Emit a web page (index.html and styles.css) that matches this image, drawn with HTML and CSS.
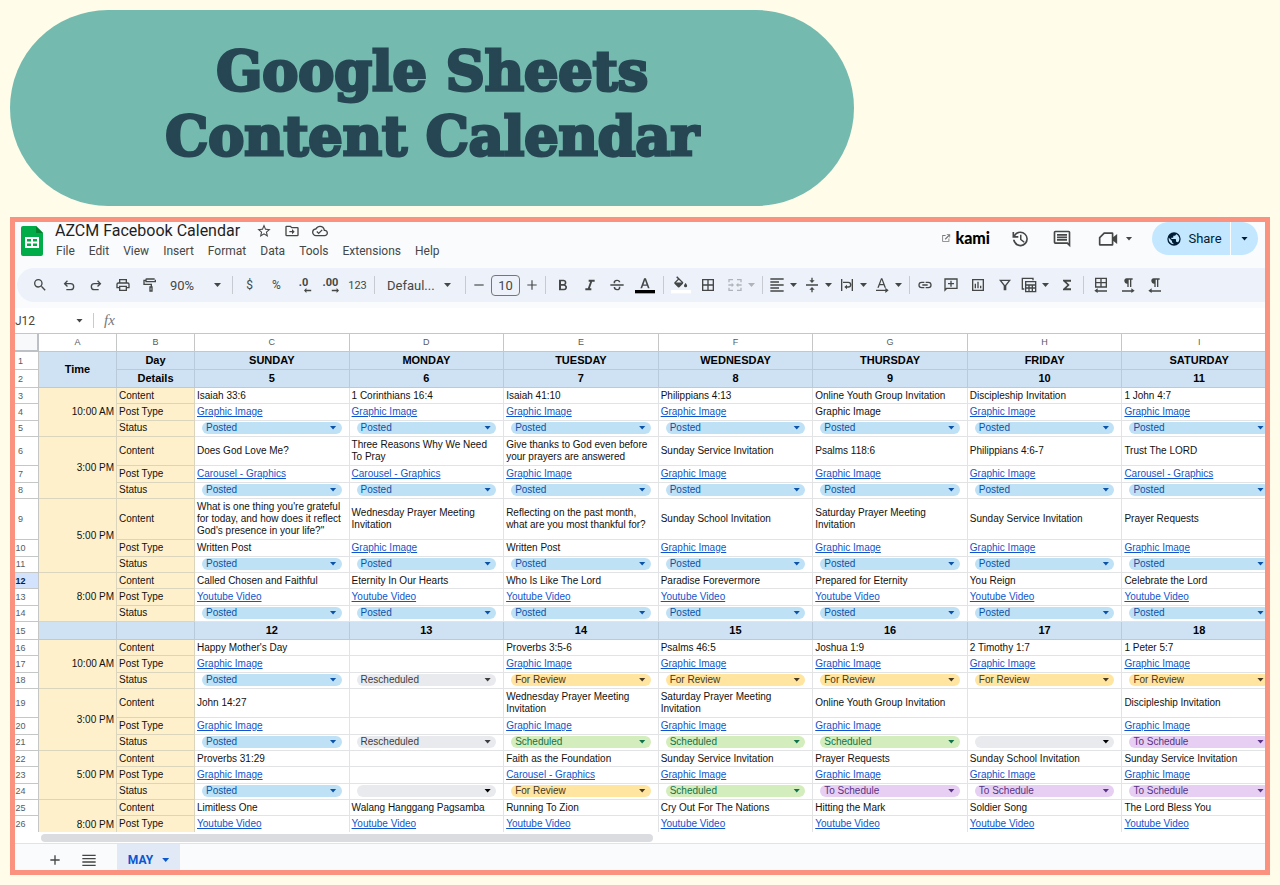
FILE: index.html
```html
<!DOCTYPE html>
<html lang="en">
<head>
  <meta charset="UTF-8">
  <meta name="viewport" content="width=device-width, initial-scale=1.0">
  <title>Google Sheets Content Calendar</title>
  <link rel="stylesheet" href="styles.css">
</head>
<body>
  <h1 class="banner">Google Sheets<br>Content Calendar</h1>

  <main class="frame">
    <header class="topbar">
      <svg class="logo" viewBox="0 0 22 30">
        <path fill="#00ac47" d="M2 0h13l7 7v21a2 2 0 0 1-2 2H2a2 2 0 0 1-2-2V2a2 2 0 0 1 2-2z"/>
        <path fill="#00832d" d="M15 0l7 7h-7z"/>
        <path fill="#fff" fill-rule="evenodd" d="M4 11h14v11H4zM6 13v2.500h4V13zM12 13v2.500h4V13zM6 17.500V20h4v-2.500zM12 17.500V20h4v-2.500z"/>
      </svg>
      <div class="doc">
        <div class="doc-title">
          <span class="doc-name">AZCM Facebook Calendar</span>
          <button class="doc-icon" aria-label="Star"><svg viewBox="0 0 24 24"><path d="M22 9.240l-7.190-.620L12 2 9.190 8.630 2 9.240l5.460 4.730L5.820 21 12 17.270 18.180 21l-1.630-7.030L22 9.240zM12 15.400l-3.760 2.270 1-4.280-3.320-2.880 4.380-.380L12 6.100l1.710 4.040 4.380.380-3.320 2.880 1 4.280L12 15.400z"/></svg></button>
          <button class="doc-icon" aria-label="Move"><svg viewBox="0 0 24 24"><path d="M20 6h-8l-2-2H4a2 2 0 0 0-2 2v12a2 2 0 0 0 2 2h16a2 2 0 0 0 2-2V8a2 2 0 0 0-2-2zm0 12H4V6h5.200l2 2H20zm-8-1l4-4-4-4v3H8v2h4z"/></svg></button>
          <button class="doc-icon" aria-label="Saved"><svg viewBox="0 0 24 24"><path d="M19.350 10.040A7.490 7.490 0 0 0 12 4C9.110 4 6.600 5.640 5.350 8.040A5.994 5.994 0 0 0 0 14c0 3.310 2.690 6 6 6h13c2.760 0 5-2.240 5-5 0-2.640-2.050-4.780-4.650-4.960zM19 18H6c-2.210 0-4-1.790-4-4 0-2.050 1.530-3.760 3.560-3.970l1.070-.110.500-.950A5.469 5.469 0 0 1 12 6c2.620 0 4.880 1.860 5.390 4.430l.300 1.500 1.530.110A2.980 2.980 0 0 1 22 15c0 1.650-1.350 3-3 3zm-9-3.820l-2.090-2.090L6.500 13.500 10 17l6.010-6.010-1.410-1.410z"/></svg></button>
        </div>
        <nav class="menu">
          <button>File</button>
          <button>Edit</button>
          <button>View</button>
          <button>Insert</button>
          <button>Format</button>
          <button>Data</button>
          <button>Tools</button>
          <button>Extensions</button>
          <button>Help</button>
        </nav>
      </div>
      <div class="actions">
        <button class="kami"><svg viewBox="0 0 24 24"><path d="M18 19H5V7h6V5H3v16h17v-8h-2zM14 3v2h4L9 14l2 2 9-9v4h2V3z"/></svg>kami</button>
        <button class="action" aria-label="History"><svg viewBox="0 0 24 24"><path d="M12.500 3A9 9 0 0 0 5 7V3.500H3V10.500H10V8.500H6.300A7 7 0 1 1 5.600 13H3.500A9 9 0 1 0 12.500 3zM12 7v6l4.500 3.500 1-1.500-3.700-2.800V7z"/></svg></button>
        <button class="action" aria-label="Comments"><svg viewBox="0 0 24 24"><path d="M22 4a2 2 0 0 0-2-2H4a2 2 0 0 0-2 2v12a2 2 0 0 0 2 2h14l4 4zM20 17l-1-1H4V4h16zM6 12h12v2H6zm0-3h12v2H6zm0-3h12v2H6z"/></svg></button>
        <button class="action meet" aria-label="Meet"><svg viewBox="0 0 24 24"><path d="M7 4h10a1.500 1.500 0 0 1 1.500 1.500v4L23 6v12l-4.500-3.500v4A1.500 1.500 0 0 1 17 20H2.500A1.500 1.500 0 0 1 1 18.500V10zM7.800 6L3 10.800V18h13.500V6z"/></svg><i class="caret"></i></button>
        <div class="share">
          <button class="share-main"><svg viewBox="0 0 24 24"><path d="M12 2a10 10 0 1 0 0 20 10 10 0 0 0 0-20zm-1 17.930A7.990 7.990 0 0 1 4.210 10.210L9 15v1a2 2 0 0 0 2 2zm6.900-2.540A2 2 0 0 0 16 16h-1v-3a1 1 0 0 0-1-1H8v-2h2a1 1 0 0 0 1-1V7h2a2 2 0 0 0 2-2v-.410a7.990 7.990 0 0 1 2.900 12.800z"/></svg>Share</button>
          <button class="share-more" aria-label="Share options"><i class="caret"></i></button>
        </div>
      </div>
    </header>

    <div class="toolbar">
      <button class="tool search" aria-label="Search"><svg viewBox="0 0 24 24"><path d="M15.500 14h-.790l-.280-.270A6.470 6.470 0 0 0 16 9.500 6.500 6.500 0 1 0 9.500 16c1.610 0 3.090-.590 4.230-1.570l.270.280v.790l5 4.990L20.490 19zm-6 0a4.500 4.500 0 1 1 0-9 4.500 4.500 0 0 1 0 9z"/></svg></button>
      <button class="tool" aria-label="Undo"><svg viewBox="0 0 24 24"><path d="M8 20v-2h6.500a3.500 3.500 0 0 0 0-7H7.800l2.600 2.600L9 15l-5-5 5-5 1.400 1.400L7.800 9h6.700a5.500 5.500 0 0 1 0 11z"/></svg></button>
      <button class="tool" aria-label="Redo"><svg viewBox="0 0 24 24"><path d="M16 20v-2H9.500a3.500 3.500 0 0 1 0-7h6.700l-2.600 2.600L15 15l5-5-5-5-1.400 1.400L16.200 9H9.500a5.500 5.500 0 0 0 0 11z"/></svg></button>
      <button class="tool" aria-label="Print"><svg viewBox="0 0 24 24"><path d="M19 8h-1V3H6v5H5a3 3 0 0 0-3 3v6h4v4h12v-4h4v-6a3 3 0 0 0-3-3zM8 5h8v3H8zm8 14H8v-4h8zm2-4v-2H6v2H4v-4a1 1 0 0 1 1-1h14a1 1 0 0 1 1 1v4z"/></svg></button>
      <button class="tool" aria-label="Paint format"><svg viewBox="0 0 24 24"><path d="M7 2h12v2h2v1H21v0a2 2 0 0 0 0 0V8H5V6H4v4h11v4h1v8h-5v-8h2v-2H2V4h3a2 2 0 0 1 2-2zm0 2v2h12V4zm6 12v4h1v-4z"/></svg></button>
      <button class="picker zoom">90%<i class="caret"></i></button>
      <span class="divider"></span>
      <button class="tool text">$</button>
      <button class="tool text">%</button>
      <button class="tool decimal" aria-label="Decrease decimal places">.0<svg viewBox="0 0 10 6"><path d="M3 0v2h6v2H3v2L0 3z"/></svg></button>
      <button class="tool decimal" aria-label="Increase decimal places">.00<svg viewBox="0 0 10 6"><path d="M7 0v2H1v2h6v2l3-3z"/></svg></button>
      <button class="tool text small">123</button>
      <span class="divider"></span>
      <button class="picker font">Defaul...<i class="caret"></i></button>
      <span class="divider"></span>
      <button class="tool step" aria-label="Decrease font size"><svg viewBox="0 0 24 24"><path d="M4 11h16v2H4z"/></svg></button>
      <input class="size" type="text" value="10" aria-label="Font size">
      <button class="tool step" aria-label="Increase font size"><svg viewBox="0 0 24 24"><path d="M4 11h7V4h2v7h7v2h-7v7h-2v-7H4z"/></svg></button>
      <span class="divider"></span>
      <button class="tool" aria-label="Bold"><svg viewBox="0 0 24 24"><path d="M6 4h7a4.300 4.300 0 0 1 2.700 7.500A4.500 4.500 0 0 1 13.500 20H6zm3 2.500v4h3.700a2 2 0 0 0 0-4zm0 6.500v4.500h4.300a2.200 2.200 0 0 0 0-4.500z"/></svg></button>
      <button class="tool" aria-label="Italic"><svg viewBox="0 0 24 24"><path d="M10 4v3h2.210l-3.420 10H5v3h9v-3h-2.210l3.420-10H19V4z"/></svg></button>
      <button class="tool" aria-label="Strikethrough"><svg viewBox="0 0 24 24"><path d="M2 11h20v2H2zM7 9.500C6 6 8.500 4 12 4c3 0 5 1.500 5 4h-2.300c0-1.300-1-2-2.700-2-2 0-3.300 1.200-2.600 3.500zM7 15h2.300c0 2 1.200 3 2.900 3 2 0 3-1.300 2.500-3.500H17c.600 3.500-1.600 5.500-5 5.500-3.100 0-5-1.900-5-5z"/></svg></button>
      <button class="tool wide" aria-label="Text color"><svg class="color-icon" viewBox="0 0 24 24"><path d="M10.900 4L6.500 16h2l1.100-3h4.800l1.100 3h2L13.100 4zM10.200 11.300L12 6.200l1.800 5.100z"/><path fill="#000" d="M0 18h24v4H0z"/></svg></button>
      <span class="divider"></span>
      <button class="tool" aria-label="Fill color"><svg class="color-icon" viewBox="0 0 24 24"><path d="M13.500 7.500L7.500 1.500 6.200 2.800l2 2-4 4a1.200 1.200 0 0 0 0 1.700l4.200 4.200a1.200 1.200 0 0 0 1.700 0l4.200-4.200a2 2 0 0 0-.8-3zM6 9l3.400-3.200L12.800 9zM17.500 9.500s-1.900 2.100-1.900 3.300a1.900 1.900 0 0 0 3.800 0c0-1.200-1.900-3.300-1.900-3.300z"/><path fill="#fff" d="M0 18h24v4H0z"/></svg></button>
      <button class="tool" aria-label="Borders"><svg viewBox="0 0 24 24"><path d="M3 3v18h18V3zm8 16H5v-6h6zm0-8H5V5h6zm8 8h-6v-6h6zm0-8h-6V5h6z"/></svg></button>
      <button class="split merge" aria-label="Merge cells" disabled><svg viewBox="0 0 24 24"><path d="M2 3h7v2H4v3H2zm13 0h7v5h-2V5h-5zM2 16h2v3h5v2H2zm18 0h2v5h-7v-2h5zM2 11h5V8.500L10.500 12 7 15.500V13H2zm20 0h-5V8.500L13.500 12l3.500 3.500V13h5z"/></svg><i class="caret"></i></button>
      <span class="divider"></span>
      <button class="split" aria-label="Horizontal align"><svg viewBox="0 0 24 24"><path d="M2 2h20v2H2zm0 4.500h13v2H2zM2 11h20v2H2zm0 4.500h13v2H2zM2 20h20v2H2z"/></svg><i class="caret"></i></button>
      <button class="split" aria-label="Vertical align"><svg viewBox="0 0 24 24"><path d="M3 11h18v2H3zM11 1h2v4h3l-4 4-4-4h3zM11 23h2v-4h3l-4-4-4 4h3z"/></svg><i class="caret"></i></button>
      <button class="split" aria-label="Text wrapping"><svg viewBox="0 0 24 24"><path d="M3 3h2v18H3zM19 3h2v18h-2zM6 7h8a4 4 0 0 1 0 9h-2v2.500L8 15l4-3.500V14h2a2 2 0 0 0 0-5H6z"/></svg><i class="caret"></i></button>
      <button class="split" aria-label="Text rotation"><svg viewBox="0 0 24 24"><path d="M10.500 2L5 16h2.200l1.300-3.500h6L15.800 16H18L12.500 2zM9.200 10.500l2.300-6.200 2.300 6.200zM3 19h14v-3l5 4-5 4v-3H3z"/></svg><i class="caret"></i></button>
      <span class="divider"></span>
      <button class="tool narrow" aria-label="Insert link"><svg viewBox="0 0 24 24"><path d="M3.900 12A3.100 3.100 0 0 1 7 8.900h4V7H7a5 5 0 0 0 0 10h4v-1.900H7A3.100 3.100 0 0 1 3.900 12zM8 13h8v-2H8zm9-6h-4v1.900h4a3.100 3.100 0 0 1 0 6.200h-4V17h4a5 5 0 0 0 0-10z"/></svg></button>
      <button class="tool" aria-label="Insert comment"><svg viewBox="0 0 24 24"><path d="M22 2H2v20l4-4h16zm-2 14H5l-1 1V4h16zM11 5.500h2V9h3.500v2H13v3.500h-2V11H7.500V9H11z"/></svg></button>
      <button class="tool" aria-label="Insert chart"><svg viewBox="0 0 24 24"><path d="M3 3v18h18V3zm16 16H5V5h14zM7 10h2v7H7zm4-3h2v10h-2zm4 6h2v4h-2z"/></svg></button>
      <button class="tool" aria-label="Create a filter"><svg viewBox="0 0 24 24"><path d="M3 4h18l-7 9v7h-4v-7zm4 2l5 6.500L17 6z"/></svg></button>
      <button class="split" aria-label="Filter views"><svg viewBox="0 0 24 24"><path d="M1 1h18v4h-2V3H3v14h2v2H1zM6 6h17v17H6zm2 2v3h13V8zm0 5v2.500h3V13zm5 0v2.500h3V13zm5 0v2.500h3V13zM8 17.500V21h3v-3.500zm5 0V21h3v-3.500zm5 0V21h3v-3.500z"/></svg><i class="caret"></i></button>
      <button class="tool" aria-label="Functions"><svg viewBox="0 0 24 24"><path d="M18 4H6v2l6.500 6L6 18v2h12v-3h-7l5-5-5-5h7z"/></svg></button>
      <span class="divider"></span>
      <button class="tool" aria-label="Sheet direction"><svg viewBox="0 0 24 24"><path d="M3 1h18v15H3zm2 2v4.500h6V3zm8 0v4.500h6V3zM5 9.500V14h6V9.500zm8 0V14h6V9.500zM7 17v3h14v2H7v2l-5-3.500z"/></svg></button>
      <button class="tool" aria-label="Left to right"><svg viewBox="0 0 24 24"><path d="M10 2h9v2h-2v11h-2V4h-2v11h-2v-5a4 4 0 0 1-1-8zM17 17v3H3v2h14v2l5-3.500z"/></svg></button>
      <button class="tool" aria-label="Right to left"><svg viewBox="0 0 24 24"><path d="M10 2h9v2h-2v11h-2V4h-2v11h-2v-5a4 4 0 0 1-1-8zM7 17v3h14v2H7v2l-5-3.500z"/></svg></button>
    </div>

    <div class="formula">
      <input class="cell-name" type="text" value="J12" aria-label="Name box">
      <i class="caret"></i>
      <span class="fx">fx</span>
      <input class="cell-value" type="text" aria-label="Formula">
    </div>

    <div class="sheet">
      <table class="grid">
        <colgroup><col class="col-num"><col class="col-side"><col class="col-side"><col><col><col><col><col><col><col></colgroup>
        <thead id="letters"></thead>
        <tbody id="rows"></tbody>
      </table>
    </div>

    <div class="scroll"><div class="thumb"></div></div>

    <footer class="tabs">
      <button class="tab-icon" aria-label="Add sheet"><svg viewBox="0 0 24 24"><path d="M5 11h6V5h2v6h6v2h-6v6h-2v-6H5z"/></svg></button>
      <button class="tab-icon" aria-label="All sheets"><svg viewBox="0 0 24 24"><path d="M2 4h20v2H2zm0 5h20v2H2zm0 5h20v2H2zm0 5h20v2H2z"/></svg></button>
      <button class="tab">MAY<i class="caret"></i></button>
    </footer>
  </main>

  <script src="script.js"></script>
</body>
</html>
```

FILE: styles.css
```css
* {
  box-sizing: border-box;
}
body {
  margin: 0;
  padding: 10px;
  height: 100vh;
  display: flex;
  flex-direction: column;
  gap: 11px;
  background: #fffde9;
  font-family: Roboto, "Liberation Sans", sans-serif;
  color: #444746;
}
button, input, select {
  margin: 0;
  padding: 0;
  border: none;
  background: none;
  font: inherit;
  color: inherit;
}
button {
  display: flex;
  align-items: center;
  justify-content: center;
  cursor: pointer;
}
svg {
  display: block;
  flex: none;
  width: 16px;
  height: 16px;
  fill: currentColor;
}
.banner {
  margin: 0;
  width: 67%;
  flex: none;
  padding: 29px 0 37px;
  border-radius: 98px;
  background: #75baaf;
  color: #264653;
  font-family: "DejaVu Serif", serif;
  font-size: 54px;
  line-height: 65px;
  font-weight: bold;
  text-align: center;
  white-space: nowrap;
  -webkit-text-stroke: 3px #264653;
}
.frame {
  flex: 1;
  min-height: 0;
  display: flex;
  flex-direction: column;
  border: 5px solid #fb917f;
  background: #f9fbfd;
  overflow: hidden;
}
.caret {
  flex: none;
  width: 7px;
  height: 4px;
  background: currentColor;
  clip-path: polygon(0 0, 100% 0, 50% 100%);
}

/* title and menus */
.topbar {
  flex: none;
  display: flex;
  align-items: flex-start;
  height: 46px;
  padding: 0 7px 0 6px;
}
.logo {
  width: 22px;
  height: 30px;
  margin-top: 4px;
}
.doc {
  margin-left: 12px;
}
.doc-title {
  display: flex;
  align-items: center;
  height: 17px;
}
.doc-name {
  margin-right: 10px;
  font-size: 16px;
  line-height: 17px;
  color: #1f1f1f;
}
.doc-icon {
  width: 28px;
}
.menu {
  display: flex;
  gap: 14px;
  height: 24px;
  padding-left: 1px;
  font-size: 12px;
}
.actions {
  display: flex;
  align-items: center;
  height: 33px;
  margin-left: auto;
}
.kami {
  gap: 4px;
  margin-right: 9px;
  padding-bottom: 2px;
  font-family: Lato, sans-serif;
  font-size: 16px;
  font-weight: 900;
  color: #000;
}
.kami svg {
  width: 10px;
  height: 10px;
  fill: #777;
}
.action {
  width: 42px;
}
.action svg {
  width: 20px;
  height: 20px;
}
.meet {
  gap: 8px;
  width: 52px;
  margin-left: 6px;
}
.share {
  display: flex;
  height: 33px;
  margin-left: 11px;
  border-radius: 17px;
  background: #c2e7ff;
  color: #001d35;
  font-size: 13px;
  overflow: hidden;
}
.share-main {
  gap: 6px;
  width: 79px;
  padding-left: 6px;
  border-right: 1px solid #f9fbfd;
}
.share-more {
  width: 27px;
}

/* toolbar */
.toolbar {
  flex: none;
  display: flex;
  align-items: center;
  height: 34px;
  margin-left: 2px;
  padding-left: 9px;
  border-radius: 17px 0 0 17px;
  background: #edf2fa;
}
.tool {
  flex: none;
  width: 27px;
  height: 26px;
}
.search {
  margin-right: 2px;
}
.wide {
  width: 30px;
}
.narrow {
  width: 24px;
}
.step {
  width: 20px;
}
.step svg {
  width: 14px;
  height: 14px;
}
.tool .color-icon {
  width: 20px;
  height: 20px;
}
.text {
  font-size: 12px;
}
.small {
  font-size: 11px;
}
.decimal {
  flex-direction: column;
  font-size: 11px;
  line-height: 11px;
  font-weight: bold;
}
.decimal svg {
  width: 8px;
  height: 5px;
  margin-left: 8px;
}
.divider {
  flex: none;
  width: 1px;
  height: 18px;
  margin: 0 3px;
  background: #c7cbd1;
}
.picker {
  flex: none;
  justify-content: space-between;
  font-size: 13px;
}
.zoom {
  width: 66px;
  padding: 0 8px 0 7px;
}
.font {
  width: 84px;
  padding: 0 11px 0 9px;
}
.size {
  flex: none;
  width: 29px;
  height: 21px;
  margin: 0 2px;
  border: 1px solid #747775;
  border-radius: 4px;
  font-size: 13px;
  text-align: center;
}
.split {
  flex: none;
  justify-content: flex-start;
  gap: 5px;
  width: 35px;
  padding-left: 3px;
}
.merge {
  width: 38px;
  padding-left: 6px;
  color: #b0b4ba;
}

/* formula bar */
.formula {
  flex: none;
  display: flex;
  align-items: center;
  height: 25px;
  margin-top: 6px;
  background: #fff;
}
.cell-name {
  width: 61px;
  font-size: 12px;
}
.fx {
  margin-left: 10px;
  padding: 0 8px 0 10px;
  border-left: 1px solid #c7cbd1;
  font-family: "Liberation Serif", serif;
  font-size: 15px;
  line-height: 15px;
  font-style: italic;
  color: #777;
}
.cell-value {
  flex: 1;
  font-size: 12px;
}

/* spreadsheet */
.sheet {
  flex: 1;
  min-height: 0;
  overflow: hidden;
  background: #fff;
  font-family: "Liberation Sans", Arial, sans-serif;
}
.grid {
  /* last column runs a little past the right edge */
  width: calc(100% + 12px);
  table-layout: fixed;
  border-collapse: separate;
  border-spacing: 0;
  font-size: 10px;
  line-height: 12px;
  color: #111;
}
.col-num {
  width: 24px;
}
.col-side {
  width: 78px;
}
.grid th, .grid td {
  padding: 0 0 0 2px;
  border-right: 1px solid #e1e3e5;
  border-bottom: 1px solid #e1e3e5;
  text-align: left;
  font-weight: normal;
  white-space: pre;
}
.grid .letter {
  height: 19px;
  padding: 0 0 2px;
  border-color: #c4c7c5;
  border-top: 1px solid #c4c7c5;
  font-size: 9px;
  text-align: center;
  color: #575b5f;
}
.grid .corner {
  border-right: 2px solid #bdc1c6;
  border-bottom: 2px solid #bdc1c6;
  background: #f8f9fa;
}
.grid .num {
  padding: 0 12px 0 0;
  border-color: #c4c7c5;
  font-size: 9px;
  text-align: center;
  color: #575b5f;
}
.grid .current {
  background: #d3e3fd;
  font-weight: bold;
  color: #041e49;
}
.grid .day {
  padding: 0 0 2px;
  border-color: #b9cbdb;
  background: #cfe2f3;
  font-size: 11px;
  font-weight: bold;
  text-align: center;
  color: #000;
}
.grid .label {
  border-color: #dcd5bd;
  background: #fff0cc;
}
.grid .time {
  padding: 0 2px 0 0;
  border-color: #dcd5bd;
  background: #fff0cc;
  text-align: right;
}
.grid .time-cut {
  padding-bottom: 1px;
  vertical-align: bottom;
}
.head { height: 18px; }
.line { height: 16px; }
.post { height: 17px; }
.line2 { height: 29px; }
.line3 { height: 41px; }
.state { height: 16px; }
.grid .state td, .grid .state th {
  padding-bottom: 2px;
}
.grid a {
  color: #1155cc;
}
.grid .status {
  padding: 0 7px;
}
.chip {
  display: flex;
  align-items: center;
  height: 12px;
  padding-right: 5px;
  border-radius: 6px;
  background: #e8eaed;
  color: #3d3d3d;
}
.chip select {
  flex: 1;
  height: 12px;
  padding-left: 4px;
  appearance: none;
}
.chip-posted { background: #bfe1f6; color: #0a53a8; }
.chip-review { background: #ffe5a0; color: #473821; }
.chip-scheduled { background: #d4edbc; color: #11734b; }
.chip-todo { background: #e6cff2; color: #5a3286; }
.chip-blank { color: #000; }

/* bottom */
.scroll {
  flex: none;
  height: 12px;
  padding: 2px 0 2px 26px;
  border-bottom: 1px solid #e1e3e5;
  background: #fff;
}
.thumb {
  width: 50%;
  height: 8px;
  border-radius: 4px;
  background: #dadce0;
}
.tabs {
  flex: none;
  display: flex;
  height: 26px;
  padding-left: 23px;
}
.tab-icon {
  width: 34px;
  height: 32px;
}
.tab {
  gap: 9px;
  width: 63px;
  height: 32px;
  margin-left: 11px;
  background: #e1e9f7;
  font-size: 12px;
  font-weight: bold;
  color: #0b57d0;
}
```

FILE: script.js
```javascript
const G = 'Graphic Image';
const C = 'Carousel - Graphics';
const Y = 'Youtube Video';
const W = 'Written Post';
const P = 'Posted';
const R = 'For Review';
const S = 'Scheduled';
const T = 'To Schedule';
const X = 'Rescheduled';

const chipClass = {
  'Posted': 'chip-posted',
  'For Review': 'chip-review',
  'Scheduled': 'chip-scheduled',
  'To Schedule': 'chip-todo',
  'Rescheduled': 'chip-other',
  '': 'chip-blank'
};

const weeks = [
  {
    slots: [
      {
        time: '10:00 AM', size: 'line', plain: [4],
        content: ['Isaiah 33:6', '1 Corinthians 16:4', 'Isaiah 41:10', 'Philippians 4:13', 'Online Youth Group Invitation', 'Discipleship Invitation', '1 John 4:7'],
        post: [G, G, G, G, G, G, G],
        status: [P, P, P, P, P, P, P]
      },
      {
        time: '3:00 PM', size: 'line2',
        content: ['Does God Love Me?', 'Three Reasons Why We Need\nTo Pray', 'Give thanks to God even before\nyour prayers are answered', 'Sunday Service Invitation', 'Psalms 118:6', 'Philippians 4:6-7', 'Trust The LORD'],
        post: [C, C, G, G, G, G, C],
        status: [P, P, P, P, P, P, P]
      },
      {
        time: '5:00 PM', size: 'line3',
        content: ['What is one thing you\'re grateful\nfor today, and how does it reflect\nGod\'s presence in your life?"', 'Wednesday Prayer Meeting\nInvitation', 'Reflecting on the past month,\nwhat are you most thankful for?', 'Sunday School Invitation', 'Saturday Prayer Meeting\nInvitation', 'Sunday Service Invitation', 'Prayer Requests'],
        post: [W, G, W, G, G, G, G],
        status: [P, P, P, P, P, P, P]
      },
      {
        time: '8:00 PM', size: 'line',
        content: ['Called Chosen and Faithful', 'Eternity In Our Hearts', 'Who Is Like The Lord', 'Paradise Forevermore', 'Prepared for Eternity', 'You Reign', 'Celebrate the Lord'],
        post: [Y, Y, Y, Y, Y, Y, Y],
        status: [P, P, P, P, P, P, P]
      }
    ]
  },
  {
    dates: [12, 13, 14, 15, 16, 17, 18],
    slots: [
      {
        time: '10:00 AM', size: 'line',
        content: ['Happy Mother\'s Day', '', 'Proverbs 3:5-6', 'Psalms 46:5', 'Joshua 1:9', '2 Timothy 1:7', '1 Peter 5:7'],
        post: [G, '', G, G, G, G, G],
        status: [P, X, R, R, R, R, R]
      },
      {
        time: '3:00 PM', size: 'line2',
        content: ['John 14:27', '', 'Wednesday Prayer Meeting\nInvitation', 'Saturday Prayer Meeting\nInvitation', 'Online Youth Group Invitation', '', 'Discipleship Invitation'],
        post: [G, '', G, G, G, '', G],
        status: [P, X, S, S, S, '', T]
      },
      {
        time: '5:00 PM', size: 'line',
        content: ['Proverbs 31:29', '', 'Faith as the Foundation', 'Sunday Service Invitation', 'Prayer Requests', 'Sunday School Invitation', 'Sunday Service Invitation'],
        post: [G, '', C, G, G, G, G],
        status: [P, '', R, S, T, T, T]
      },
      {
        time: '8:00 PM', size: 'line',
        content: ['Limitless One', 'Walang Hanggang Pagsamba', 'Running To Zion', 'Cry Out For The Nations', 'Hitting the Mark', 'Soldier Song', 'The Lord Bless You'],
        post: [Y, Y, Y, Y, Y, Y, Y]
      }
    ]
  }
];

let html = '';
let rowNumber = 0;

function addRow(size, cells) {
  rowNumber++;
  const current = rowNumber === 12 ? ' current' : '';
  html += `<tr class="${size}"><th class="num${current}" scope="row">${rowNumber}</th>${cells}</tr>`;
}

function dayCells(values) {
  return values.map(v => `<td class="day">${v}</td>`).join('');
}

function postCell(value, isPlain) {
  if (!value || value === W || isPlain) return `<td>${value}</td>`;
  return `<td><a href="#">${value}</a></td>`;
}

function statusCell(value) {
  const options = Object.keys(chipClass)
    .map(o => `<option${o === value ? ' selected' : ''}>${o}</option>`)
    .join('');
  return `<td class="status"><div class="chip ${chipClass[value]}"><select aria-label="Status">${options}</select><i class="caret"></i></div></td>`;
}

document.getElementById('letters').innerHTML =
  '<tr><th class="letter corner"></th>' +
  'ABCDEFGHI'.split('').map(l => `<th class="letter" scope="col">${l}</th>`).join('') + '</tr>';

addRow('head', '<td class="day" rowspan="2">Time</td>' +
  dayCells(['Day', 'SUNDAY', 'MONDAY', 'TUESDAY', 'WEDNESDAY', 'THURSDAY', 'FRIDAY', 'SATURDAY']));
addRow('head', dayCells(['Details', 5, 6, 7, 8, 9, 10, 11]));

weeks.forEach(week => {
  if (week.dates) addRow('head', dayCells(['', '', ...week.dates]));
  week.slots.forEach(slot => {
    const plain = slot.plain || [];
    const time = slot.status
      ? `<td class="time" rowspan="3">${slot.time}</td>`
      : `<td class="time time-cut" rowspan="2">${slot.time}</td>`;
    addRow(slot.size, time + '<td class="label">Content</td>' + slot.content.map(v => `<td>${v}</td>`).join(''));
    addRow('post', '<td class="label">Post Type</td>' + slot.post.map((v, i) => postCell(v, plain.includes(i))).join(''));
    if (slot.status) {
      addRow('state', '<td class="label">Status</td>' + slot.status.map(statusCell).join(''));
    }
  });
});

document.getElementById('rows').innerHTML = html;
```
